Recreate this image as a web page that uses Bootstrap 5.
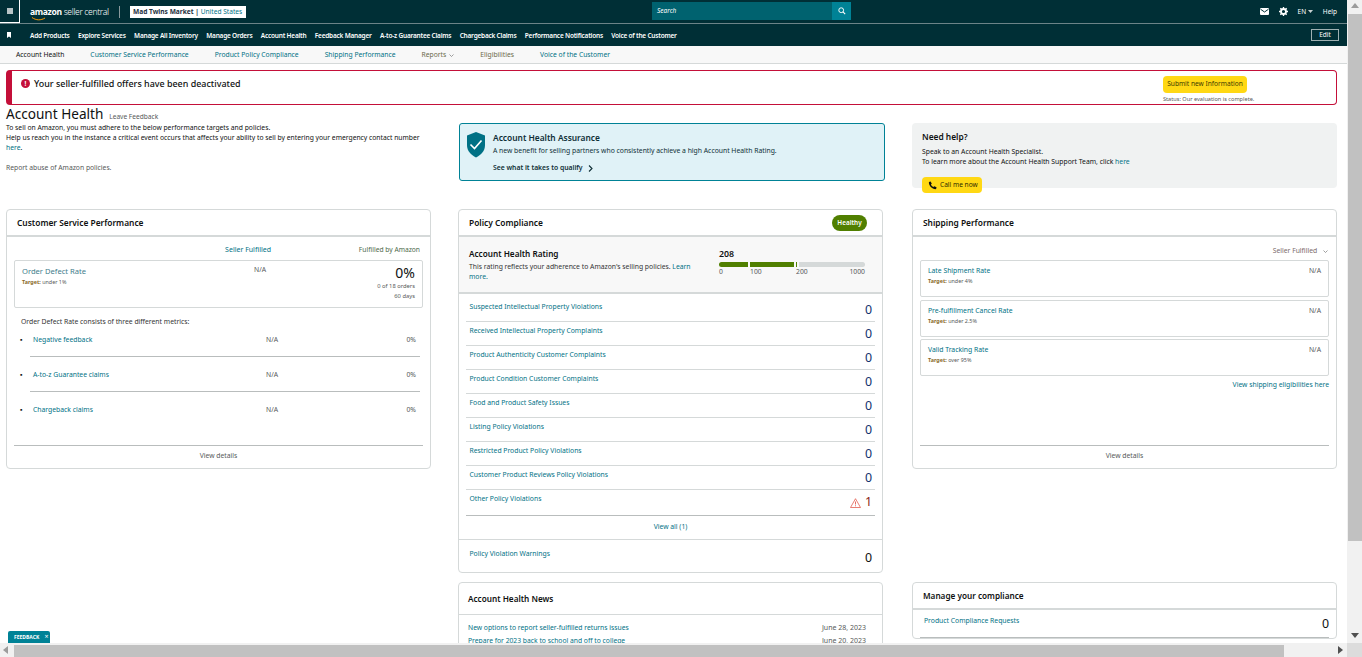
<!DOCTYPE html>
<html lang="en">
<head>
    <meta charset="UTF-8">
    <title>Account Health</title>
    <link href="https://cdn.jsdelivr.net/npm/bootstrap@5.3.0/dist/css/bootstrap.min.css" rel="stylesheet">
    <style>
        html, body { height: 100%; overflow: hidden; }
        body { font-family: "Noto Sans", "Open Sans", sans-serif; font-size: 7px; line-height: 10px; color: #0f1111; background: #fff; }
        a { color: #007185; text-decoration: none; }
        .sc-top { height: 24px; background: #002f36; border-bottom: 1px solid #6c8488; color: #fff; }
        .sc-menu { width: 20px; height: 23px; border-right: 1px solid #fff; border-bottom: 1px solid #fff; }
        .sc-burger { width: 6px; height: 6px; background: #b8c4c6; }
        .sc-logo { margin-left: 10px; width: 81px; font-size: 8.6px; font-weight: 300; letter-spacing: -.35px; position: relative; white-space: nowrap; }
        .sc-logo b { font-weight: 700; }
        .sc-smile { position: absolute; left: 1px; top: 10px; }
        .sc-divider { width: 1px; height: 12px; background: #8a9a9d; margin: 0 10px 0 8px; }
        .sc-store { height: 12px; width: 116px; background: #fff; color: #232f3e; font-size: 6.6px; font-weight: 700; padding-left: 3px; white-space: nowrap; }
        .sc-store span { font-weight: 400; color: #007185; }
        .sc-search { position: absolute; left: 652px; top: 2px; width: 199px; height: 18px; }
        .sc-search-input { width: 180px; background: #00626f; color: #fff; font-size: 6.5px; font-style: italic; padding-left: 5px; }
        .sc-search-btn { width: 19px; background: #008296; }
        .sc-tools { margin-left: auto; padding-right: 25px; font-size: 6.5px; gap: 10px; }
        .sc-nav { height: 22px; background: #002f36; color: #fff; padding-left: 7px; padding-right: 23px; }
        .sc-nav-links { margin-left: 19px; padding-top: 1px; gap: 8.4px; font-size: 6.5px; font-weight: 600; letter-spacing: -.22px; white-space: nowrap; }
        .sc-edit { margin-left: auto; width: 28px; height: 12px; border: 1px solid #9fb0b2; font-size: 6.5px; line-height: 10px; text-align: center; }
        .sc-sub { height: 18px; background: #f8f8f8; border-bottom: 1px solid #d5d9d9; padding: 1px 0 0 16px; gap: 26px; font-size: 6.75px; white-space: nowrap; }
        .sc-sub a { color: #007185; }
        .sc-sub a.sc-on { color: #0f1111; }
        .sc-sub a.sc-brown { color: #6b6a4a; }
        .sc-reports { gap: 3px; }
        .sc-page { padding: 6px 25px 0 6px; }
        .sc-alert { height: 35px; border: 1px solid #c40f39; border-left-width: 6px; border-radius: 4px; padding-left: 9px; margin-bottom: 1px; }
        .sc-alert-dot { width: 9px; height: 9px; border-radius: 50%; background: #c40f39; color: #fff; font-size: 6.5px; line-height: 9px; font-weight: 700; text-align: center; flex: none; }
        .sc-alert-title { font-size: 8.95px; font-weight: 500; margin-left: 4px; margin-top: 8px; }
        .sc-alert-act { position: absolute; left: 1163px; top: 76px; }
        .sc-yellow { background: #ffd814; border-radius: 4px; color: #3d3a00; font-size: 6.6px; }
        .sc-alert-btn { width: 84px; height: 17px; line-height: 16px; text-align: center; }
        .sc-status { font-size: 5.6px; color: #565959; margin-top: 2px; line-height: 8px; white-space: nowrap; }
        .sc-cols { align-items: flex-start; }
        .sc-col { width: 425px; flex: none; }
        .sc-col-mid { margin: 0 29px 0 27px; }
        .sc-intro { height: 103px; }
        .sc-title { font-size: 13.6px; line-height: 15px; font-weight: 400; margin: 0; display: inline; }
        .sc-intro p { margin: 0; font-size: 6.75px; }
        .sc-intro-first { padding-top: 1px; }
        .sc-leave { font-size: 6.6px; }
        .sc-grey { color: #565959; }
        .sc-top-gap { margin-top: 17px; }
        .sc-assure { width: 426px; margin-left: 1px; height: 58px; background: #e0f2f7; border: 1px solid #008296; border-radius: 3px; padding: 8px 0 0 7px; gap: 8px; color: #0f2f36; }
        .sc-assure h6, .sc-help h6 { font-size: 8.4px; line-height: 11px; font-weight: 600; margin: 0 0 3px; }
        .sc-assure p { margin: 0 0 7px; font-size: 6.8px; }
        .sc-assure strong { font-size: 6.8px; font-weight: 600; }
        .sc-help { height: 65px; background: #f0f2f2; border-radius: 4px; padding: 8px 10px; }
        .sc-help h6 { margin-bottom: 5px; }
        .sc-help p { margin: 0 0 10px; font-size: 6.8px; }
        .sc-call { width: 60px; height: 16px; gap: 3px; padding-left: 6px; color: #2d2a00; }
        .sc-card { --bs-card-border-color: #d5d9d9; --bs-card-border-radius: 4px; --bs-card-bg: #fff; border-width: 1px; }
        .sc-card-head { height: 27px; border-bottom: 2px solid #d5d9d9; padding: 0 10px; font-size: 8.4px; font-weight: 600; }
        .sc-gap-a { margin-top: 28px; }
        .sc-gap-b { margin-top: 9px; }
        .sc-csp { height: 260px; }
        .sc-ship { height: 260px; }
        .sc-csp-cols { padding: 8px 10px 0 0; height: 23px; }
        .sc-c1 { width: 264px; text-align: right; }
        .sc-fba { color: #4d6a4a; font-size: 6.7px; }
        .sc-metric { margin: 0 7px; height: 48px; border: 1px solid #d5d9d9; border-radius: 2px; padding: 4px 7px; position: relative; }
        .sc-metric-name { font-size: 7.6px; color: #3f7d8c; line-height: 12px; }
        .sc-target { font-size: 5.4px; color: #565959; }
        .sc-target b { font-weight: 700; color: #8a6a2a; }
        .sc-na { color: #565959; font-size: 6.8px; }
        .sc-big { font-size: 14px; line-height: 16px; }
        .sc-small { font-size: 5.8px; line-height: 10px; color: #565959; }
        .sc-lead { margin: 9px 14px 3px; font-size: 6.8px; color: #333; }
        .sc-sublist { list-style: none; margin: 0; padding: 0 0 0 7px; }
        .sc-sublist li { display: flex; height: 35px; padding-top: 5px; font-size: 6.8px; position: relative; }
        .sc-bullet { width: 19px; padding-left: 6px; color: #0f1111; }
        .sc-rowline { position: absolute; left: 16px; right: 10px; top: 26px; border-top: 1px solid #b9bdbd; }
        .sc-sublist a { width: 233px; }
        .sc-pct { margin-left: auto; margin-right: 14px; color: #565959; }
        .sc-foot { position: absolute; left: 7px; right: 7px; bottom: 0; height: 23px; border-top: 1px solid #b9bdbd; text-align: center; padding-top: 5px; font-size: 6.8px; color: #565959; }
        .sc-foot a { color: #565959; }
        .sc-pill { background: #507f00; color: #fff; border-radius: 9px; width: 35px; height: 16px; line-height: 16px; text-align: center; font-size: 6.4px; font-weight: 600; margin-right: 5px; }
        .sc-rate { height: 57px; background: #f8f8f8; border-bottom: 2px solid #d5d9d9; padding: 11px 16px 0 10px; }
        .sc-rate-txt { width: 235px; margin-right: 15px; font-size: 6.8px; color: #333; }
        .sc-rate-txt h6 { font-size: 8.2px; line-height: 11px; font-weight: 600; margin: 0 0 3px; color: #0f1111; }
        .sc-rate-bar { padding-top: 1px; }
        .sc-rate-num { font-size: 8.8px; line-height: 10px; font-weight: 600; margin-bottom: 3px; }
        .sc-track { width: 146px; height: 5px; gap: 2px; }
        .sc-seg { background: #507f00; height: 5px; }
        .sc-seg-rest { background: #d5d9d9; flex: 1; height: 5px; border-radius: 0 3px 3px 0; }
        .sc-scale { width: 146px; font-size: 6.8px; color: #565959; position: relative; height: 10px; }
        .sc-scale span { position: absolute; top: 0; }
        .sc-viol { margin: 4px 7px 0 7px; }
        .sc-viol-row { height: 24px; border-bottom: 1px solid #d5d9d9; padding: 4px 3px 0 3.5px; font-size: 6.8px; }
        .sc-viol-row.sc-end { height: 26px; border-bottom-color: #b9bdbd; }
        .sc-num { margin-left: auto; font-size: 12.4px; line-height: 14px; margin-top: 1px; color: #12316d; }
        .sc-viol-all { height: 23px; text-align: center; padding-top: 6px; font-size: 6.8px; }
        .sc-warn { padding: 9px 10px 0 10.5px; height: 33px; font-size: 6.8px; border-top: 1px solid #d5d9d9; }
        .sc-warn .sc-num { margin-top: 2px; color: #0f1111; }
        .sc-news-row { padding: 0 16px 0 9px; font-size: 6.75px; height: 12.6px; white-space: nowrap; }
        .sc-news-row span { color: #565959; font-size: 7px; }
        .sc-news-head { height: 32px; border-bottom: 1px solid #d5d9d9; padding: 0 9px; font-size: 8.2px; font-weight: 600; }
        .sc-news-list { padding-top: 8px; }
        .sc-ship-filter { padding: 9px 8px 0 0; height: 23px; text-align: right; font-size: 6.8px; color: #7a6a6a; }
        .sc-ship-item { margin: 0 7px 2.5px; height: 37px; border: 1px solid #d5d9d9; border-radius: 2px; padding: 5px 7px; font-size: 6.8px; }
        .sc-ship-more { text-align: right; padding-right: 7px; font-size: 6.8px; margin-top: 1px; }
        .sc-manage-head { height: 27px; border-bottom: 2px solid #d5d9d9; padding: 0 10px; font-size: 8.2px; font-weight: 600; }
        .sc-manage-row { margin: 0 7px; padding: 6px 0 0 4px; height: 28px; border-bottom: 1px solid #b9bdbd; font-size: 6.8px; }
        .sc-feedback { position: fixed; left: 8px; bottom: 14px; width: 42px; height: 12px; background: #008296; color: #fff; font-size: 5px; font-weight: 700; border-radius: 2px 2px 0 0; padding-left: 6px; line-height: 12px; z-index: 3; white-space: nowrap; }
        .sc-feedback span { font-size: 7px; font-weight: 400; }
        .sc-vbar { position: fixed; right: 0; top: 0; bottom: 0; width: 15px; background: #f1f1f1; z-index: 4; }
        .sc-vthumb { position: absolute; left: 1px; right: 0; top: 14px; height: 527px; background: #c1c1c1; }
        .sc-hbar { position: fixed; left: 0; right: 15px; bottom: 0; height: 14px; background: #f1f1f1; z-index: 4; }
        .sc-hthumb { position: absolute; left: 14px; width: 1270px; top: 2px; bottom: 0; background: #c1c1c1; }
        .sc-corner { position: fixed; right: 0; bottom: 0; width: 15px; height: 14px; background: #dcdcdc; z-index: 4; }
        .sc-arrow { position: absolute; width: 0; height: 0; border-style: solid; border-color: transparent; }
    </style>
</head>
<body>
    <!-- Top bar -->
    <div class="sc-top d-flex align-items-center">
        <div class="sc-menu d-flex align-items-center justify-content-center"><div class="sc-burger"></div></div>
        <div class="sc-logo"><b>amazon</b> seller central
            <svg class="sc-smile" width="16" height="4" viewBox="0 0 16 4"><path d="M1 0.5C5 3.5 10 3.5 14 1" stroke="#f90" fill="none" stroke-width="1"/></svg>
        </div>
        <div class="sc-divider"></div>
        <div class="sc-store d-flex align-items-center">Mad Twins Market&nbsp;|&nbsp;<span>United States</span></div>
        <div class="sc-search d-flex">
            <div class="sc-search-input d-flex align-items-center">Search</div>
            <div class="sc-search-btn d-flex align-items-center justify-content-center">
                <svg width="8" height="8" viewBox="0 0 10 10"><circle cx="4" cy="4" r="3" fill="none" stroke="#fff" stroke-width="1.2"/><path d="M6.2 6.2L9 9" stroke="#fff" stroke-width="1.4"/></svg>
            </div>
        </div>
        <div class="sc-tools d-flex align-items-center">
            <svg width="9" height="7" viewBox="0 0 9 7"><rect width="9" height="7" rx="1" fill="#fff"/><path d="M0.5 1.2L4.5 4L8.5 1.2" stroke="#002f36" fill="none"/></svg>
            <svg width="9" height="9" viewBox="0 0 10 10"><circle cx="5" cy="5" r="2.8" fill="none" stroke="#fff" stroke-width="2"/><path d="M5 0V2M5 8V10M0 5H2M8 5H10M1.5 1.5L3 3M7 7L8.5 8.5M1.5 8.5L3 7M7 3L8.5 1.5" stroke="#fff" stroke-width="1.5"/></svg>
            <span>EN <svg width="5" height="3" viewBox="0 0 5 3"><path d="M0 0H5L2.5 3Z" fill="#c9d2d3"/></svg></span>
            <span>Help</span>
        </div>
    </div>

    <!-- Bookmarks -->
    <div class="sc-nav d-flex align-items-center">
        <svg width="4" height="6" viewBox="0 0 4 6"><path d="M0 0H4V6L2 4.6L0 6Z" fill="#fff"/></svg>
        <div class="sc-nav-links d-flex">
            <span>Add Products</span><span>Explore Services</span><span>Manage All Inventory</span><span>Manage Orders</span><span>Account Health</span><span>Feedback Manager</span><span>A-to-z Guarantee Claims</span><span>Chargeback Claims</span><span>Performance Notifications</span><span>Voice of the Customer</span>
        </div>
        <div class="sc-edit">Edit</div>
    </div>

    <!-- Sub navigation -->
    <div class="sc-sub d-flex align-items-center">
        <a class="sc-on" href="#">Account Health</a>
        <a href="#">Customer Service Performance</a>
        <a href="#">Product Policy Compliance</a>
        <a href="#">Shipping Performance</a>
        <a class="sc-brown sc-reports d-flex align-items-center" href="#">Reports<svg width="5" height="3" viewBox="0 0 5 3"><path d="M.5 .5L2.5 2.5L4.5 .5" stroke="#777" fill="none" stroke-width=".7"/></svg></a>
        <a class="sc-brown" href="#">Eligibilities</a>
        <a href="#">Voice of the Customer</a>
    </div>

    <div class="sc-page">
        <div class="sc-alert d-flex align-items-start">
            <div class="sc-alert-dot mt-2">!</div>
            <div class="sc-alert-title">Your seller-fulfilled offers have been deactivated</div>
        </div>
        <div class="sc-alert-act">
            <div class="sc-yellow sc-alert-btn">Submit new Information</div>
            <div class="sc-status">Status: Our evaluation is complete.</div>
        </div>

        <div class="sc-cols d-flex">
            <!-- Left column -->
            <div class="sc-col">
                <div class="sc-intro">
                    <h1 class="sc-title">Account Health</h1>
                    <a class="sc-grey sc-leave ms-1" href="#">Leave Feedback</a>
                    <p class="sc-intro-first">To sell on Amazon, you must adhere to the below performance targets and policies.</p>
                    <p>Help us reach you in the instance a critical event occurs that affects your ability to sell by entering your emergency contact number <a href="#">here</a>.</p>
                    <p>&nbsp;</p>
                    <p><a class="sc-grey" href="#">Report abuse of Amazon policies.</a></p>
                </div>
                <div class="card sc-card sc-csp position-relative">
                    <div class="sc-card-head d-flex align-items-center">Customer Service Performance</div>
                    <div class="sc-csp-cols d-flex justify-content-between">
                        <a class="sc-c1" href="#">Seller Fulfilled</a>
                        <span class="sc-fba">Fulfilled by Amazon</span>
                    </div>
                    <div class="sc-metric d-flex">
                        <div style="width:232px">
                            <div class="sc-metric-name">Order Defect Rate</div>
                            <div class="sc-target"><b>Target:</b> under 1%</div>
                        </div>
                        <div class="sc-na">N/A</div>
                        <div class="ms-auto text-end">
                            <div class="sc-big">0%</div>
                            <div class="sc-small">0 of 18 orders</div>
                            <div class="sc-small">60 days</div>
                        </div>
                    </div>
                    <div class="sc-lead">Order Defect Rate consists of three different metrics:</div>
                    <ul class="sc-sublist">
                        <li><span class="sc-bullet">▪</span><a href="#">Negative feedback</a><span class="sc-na">N/A</span><span class="sc-pct">0%</span><span class="sc-rowline"></span></li>
                        <li><span class="sc-bullet">▪</span><a href="#">A-to-z Guarantee claims</a><span class="sc-na">N/A</span><span class="sc-pct">0%</span><span class="sc-rowline"></span></li>
                        <li><span class="sc-bullet">▪</span><a href="#">Chargeback claims</a><span class="sc-na">N/A</span><span class="sc-pct">0%</span></li>
                    </ul>
                    <div class="sc-foot"><a href="#">View details</a></div>
                </div>
            </div>

            <!-- Middle column -->
            <div class="sc-col sc-col-mid sc-top-gap">
                <div class="sc-assure d-flex">
                    <svg width="18" height="26" viewBox="0 0 18 26"><path d="M9 0L18 3.5V13C18 19 14 23 9 25.5C4 23 0 19 0 13V3.5Z" fill="#007185"/><path d="M3.5 12.5L7.5 16.5L14.5 8.5" stroke="#fff" stroke-width="1.6" fill="none"/></svg>
                    <div>
                        <h6>Account Health Assurance</h6>
                        <p>A new benefit for selling partners who consistently achieve a high Account Health Rating.</p>
                        <strong>See what it takes to qualify</strong>
                        <svg class="ms-1" width="5" height="7" viewBox="0 0 5 7"><path d="M1 .5L4 3.5L1 6.5" stroke="#0f2f36" fill="none" stroke-width="1.1"/></svg>
                    </div>
                </div>
                <div class="card sc-card sc-gap-a">
                    <div class="sc-card-head d-flex align-items-center justify-content-between">Policy Compliance <div class="sc-pill">Healthy</div></div>
                    <div class="sc-rate d-flex">
                        <div class="sc-rate-txt">
                            <h6>Account Health Rating</h6>
                            This rating reflects your adherence to Amazon's selling policies. <a href="#">Learn more.</a>
                        </div>
                        <div class="sc-rate-bar">
                            <div class="sc-rate-num">208</div>
                            <div class="sc-track d-flex">
                                <div class="sc-seg rounded-start" style="width:29px"></div>
                                <div class="sc-seg" style="width:44px"></div>
                                <div class="sc-seg" style="width:1px"></div>
                                <div class="sc-seg-rest"></div>
                            </div>
                            <div class="sc-scale">
                                <span style="left:0">0</span><span style="left:31px">100</span><span style="left:77px">200</span><span style="right:0">1000</span>
                            </div>
                        </div>
                    </div>
                    <div class="sc-viol">
                        <div class="sc-viol-row d-flex"><a href="#">Suspected Intellectual Property Violations</a><span class="sc-num">0</span></div>
                        <div class="sc-viol-row d-flex"><a href="#">Received Intellectual Property Complaints</a><span class="sc-num">0</span></div>
                        <div class="sc-viol-row d-flex"><a href="#">Product Authenticity Customer Complaints</a><span class="sc-num">0</span></div>
                        <div class="sc-viol-row d-flex"><a href="#">Product Condition Customer Complaints</a><span class="sc-num">0</span></div>
                        <div class="sc-viol-row d-flex"><a href="#">Food and Product Safety Issues</a><span class="sc-num">0</span></div>
                        <div class="sc-viol-row d-flex"><a href="#">Listing Policy Violations</a><span class="sc-num">0</span></div>
                        <div class="sc-viol-row d-flex"><a href="#">Restricted Product Policy Violations</a><span class="sc-num">0</span></div>
                        <div class="sc-viol-row d-flex"><a href="#">Customer Product Reviews Policy Violations</a><span class="sc-num">0</span></div>
                        <div class="sc-viol-row sc-end d-flex"><a href="#">Other Policy Violations</a>
                            <span class="ms-auto d-flex">
                                <svg class="me-1 mt-1" width="11" height="10" viewBox="0 0 11 10"><path d="M5.5 .7L10.5 9.5H.5Z" fill="none" stroke="#e0473a" stroke-width=".7"/><path d="M5.5 3.5V6.5M5.5 7.3V8.3" stroke="#e0473a" stroke-width=".8"/></svg>
                                <span class="sc-num" style="color:#8c1c13">1</span>
                            </span>
                        </div>
                        <div class="sc-viol-all"><a href="#">View all (1)</a></div>
                    </div>
                    <div class="sc-warn d-flex"><a href="#">Policy Violation Warnings</a><span class="sc-num">0</span></div>
                </div>
                <div class="card sc-card sc-gap-b">
                    <div class="sc-news-head d-flex align-items-center">Account Health News</div>
                    <div class="sc-news-list">
                        <div class="sc-news-row d-flex justify-content-between"><a href="#">New options to report seller-fulfilled returns issues</a><span>June 28, 2023</span></div>
                        <div class="sc-news-row d-flex justify-content-between"><a href="#">Prepare for 2023 back to school and off to college</a><span>June 20, 2023</span></div>
                    </div>
                </div>
            </div>

            <!-- Right column -->
            <div class="sc-col sc-top-gap">
                <div class="sc-help">
                    <h6>Need help?</h6>
                    <p>Speak to an Account Health Specialist.<br>To learn more about the Account Health Support Team, click <a href="#">here</a></p>
                    <div class="sc-yellow sc-call d-flex align-items-center">
                        <svg width="9" height="9" viewBox="0 0 10 10"><path d="M1 1C.5 5 5 9.5 9 9L9.5 7L7 5.8L6 6.8C4.8 6.3 3.7 5.2 3.2 4L4.2 3L3 .5Z" fill="#0f1111"/></svg>
                        Call me now
                    </div>
                </div>
                <div class="card sc-card sc-ship position-relative" style="margin-top:21px">
                    <div class="sc-card-head d-flex align-items-center">Shipping Performance</div>
                    <div class="sc-ship-filter">Seller Fulfilled <svg class="ms-1" width="5" height="3" viewBox="0 0 5 3"><path d="M.5 .5L2.5 2.5L4.5 .5" stroke="#777" fill="none" stroke-width=".7"/></svg></div>
                    <div class="sc-ship-item d-flex justify-content-between"><div><a href="#">Late Shipment Rate</a><div class="sc-target"><b>Target:</b> under 4%</div></div><span class="sc-na">N/A</span></div>
                    <div class="sc-ship-item d-flex justify-content-between"><div><a href="#">Pre-fulfillment Cancel Rate</a><div class="sc-target"><b>Target:</b> under 2.5%</div></div><span class="sc-na">N/A</span></div>
                    <div class="sc-ship-item d-flex justify-content-between"><div><a href="#">Valid Tracking Rate</a><div class="sc-target"><b>Target:</b> over 95%</div></div><span class="sc-na">N/A</span></div>
                    <div class="sc-ship-more"><a href="#">View shipping eligibilities here</a></div>
                    <div class="sc-foot"><a href="#">View details</a></div>
                </div>
                <div class="card sc-card" style="margin-top:113px">
                    <div class="sc-manage-head d-flex align-items-center">Manage your compliance</div>
                    <div class="sc-manage-row d-flex"><a href="#">Product Compliance Requests</a><span class="sc-num" style="color:#0f1111">0</span></div>
                </div>
            </div>
        </div>
    </div>

    <div class="sc-feedback">FEEDBACK <span class="ms-1">×</span></div>

    <!-- Window scrollbars as they appear in the picture -->
    <div class="sc-vbar">
        <div class="sc-vthumb"></div>
        <span class="sc-arrow" style="left:4px;top:3px;border-width:0 4px 5px;border-bottom-color:#9c9c9c"></span>
        <span class="sc-arrow" style="left:4px;bottom:19px;border-width:5px 4px 0;border-top-color:#505050"></span>
    </div>
    <div class="sc-hbar">
        <div class="sc-hthumb"></div>
        <span class="sc-arrow" style="left:3px;top:3px;border-width:4px 5px 4px 0;border-right-color:#9c9c9c"></span>
        <span class="sc-arrow" style="right:4px;top:3px;border-width:4px 0 4px 5px;border-left-color:#505050"></span>
    </div>
    <div class="sc-corner"></div>

    <script src="https://cdn.jsdelivr.net/npm/bootstrap@5.3.0/dist/js/bootstrap.bundle.min.js"></script>
</body>
</html>
